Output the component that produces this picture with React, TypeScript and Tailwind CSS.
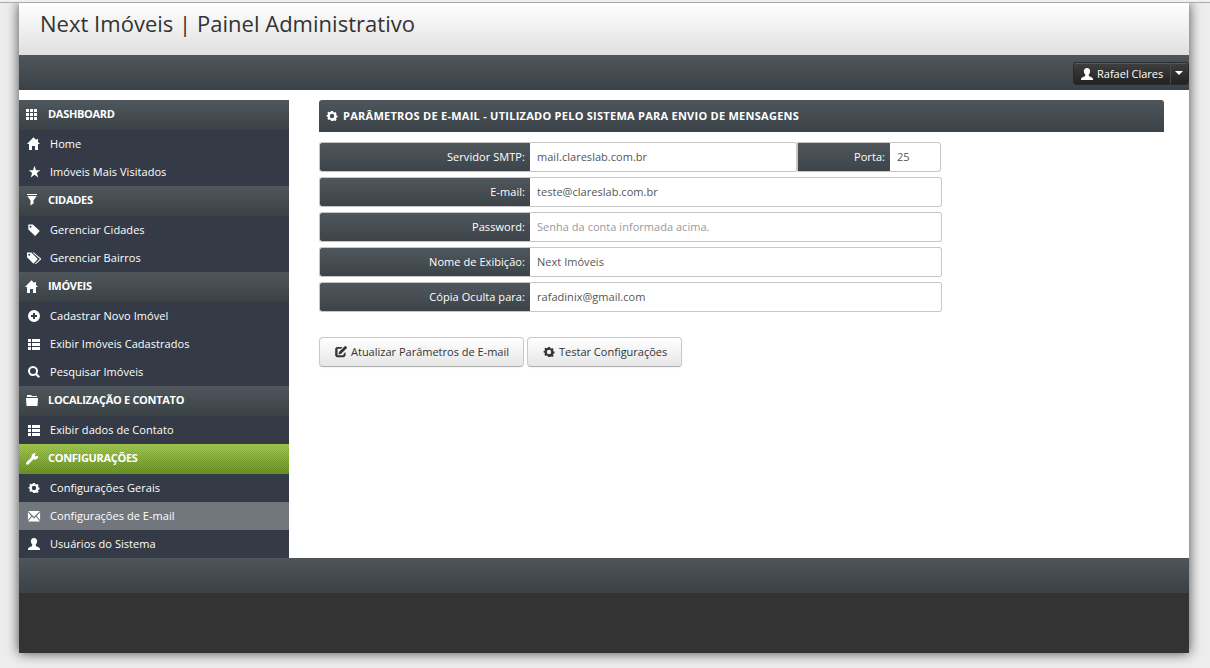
import React from 'react';
import clsx from 'clsx';

type IconName =
  | 'grid'
  | 'home'
  | 'star'
  | 'filter'
  | 'tag'
  | 'tags'
  | 'plus'
  | 'list'
  | 'search'
  | 'folder'
  | 'wrench'
  | 'cog'
  | 'mail'
  | 'user'
  | 'edit';

const ICONS: Record<IconName, string> = {
  grid: 'M1 1h3v3H1zM5 1h3v3H5zM9 1h3v3H9zM1 5h3v3H1zM5 5h3v3H5zM9 5h3v3H9zM1 9h3v3H1zM5 9h3v3H5zM9 9h3v3H9z',
  home: 'M6.500.300L0 7h2v6h3V9h3v4h3V7h2l-2-2V2H9.500v1.300z',
  star: 'M7.500.800L9 5.300h4.200L9.900 8l1.300 4.500-3.700-2.700-3.700 2.700L5.100 8 1.800 5.300H6z',
  filter: 'M2 0h10v1H2zM2.300 2h9.400L8.500 6.500V9.500L5.500 11.500V6.500z',
  tag: 'M1.300 1.500h4.500l7 6.500-4.600 5L1.300 6.500zM3.500 2.800a1 1 0 1 0 0 2 1 1 0 0 0 0-2z',
  tags: 'M0 1.500h4.300l6.500 6.500-4.300 4.700L0 6.300zM2.300 2.800a1 1 0 1 0 0 2 1 1 0 0 0 0-2zM5.500 1.500h1.300l7.700 6.500-5.500 5h-1.200L12.900 8z',
  plus: 'M7 1a6 6 0 1 0 0 12A6 6 0 0 0 7 1zM6 4h2v2h2v2H8v2H6V8H4V6h2z',
  list: 'M1 2h3v3H1zM5 2h8v3H5zM1 6h3v3H1zM5 6h8v3H5zM1 10h3v3H1zM5 10h8v3H5z',
  search:
    'M6 1a5 5 0 1 0 2.700 9.200L11.500 13 13 11.500l-2.800-2.800A5 5 0 0 0 6 1zM6 3a3 3 0 1 1 0 6 3 3 0 0 1 0-6z',
  folder: 'M2 3V1h4l1 1h5v1H2zM1 4h12l-.5 8h-11z',
  wrench: 'M9.500 1.300L11 .8 9.700 3l1 1.500 2.500-.8c0 3-2 4.500-4.600 3.500L3.300 12.500c-1.500 1-3-.5-2-2L6.500 5.300C6 3.500 7.200 1.500 9.500 1.300z',
  cog: 'M6 1.700h2l.4 1.300 1 .4 1.200-.6 1.400 1.400-.6 1.200.4 1 1.200.4v1.800l-1.200.4-.4 1 .6 1.200-1.400 1.400-1.200-.6-1 .4L8 12.700H6l-.4-1.300-1-.4-1.200.6L2 10.200 2.600 9l-.4-1L1 7.600V6.400L2.200 6l.4-1L2 3.800l1.400-1.300 1.200.6 1-.4zM7 4.800a2.400 2.400 0 1 0 0 4.800A2.400 2.400 0 0 0 7 4.800z',
  mail: 'M1 2h12L7 7.700zM.9 3.300L4.300 6.900.9 11zM13.100 3.300L9.700 6.900l3.400 4.100zM5 7.700l2 1.800 2-1.800L13 12.500H1z',
  user: 'M7 1c2 0 3.200 1.300 3.100 3.200 0 1.300-.5 2.400-1.300 3.200v1.300c.4 1 4.200 1.300 4.200 3.300v1H1v-1c0-2 3.800-2.300 4.200-3.300V7.400C4.400 6.600 3.900 5.500 3.900 4.200 3.800 2.300 5 1 7 1z',
  edit: 'M2.800 2h5.700L7 3.800H3.500v6.400h6V9l2-2v3.700L10 12.300H2.800L1.200 10.700V3.600zM11.300.8l1.900 1.900-6 6-2.900.9.900-2.900z',
};

const Icon = ({ name, className }: { name: IconName; className?: string }) => (
  <svg
    viewBox={name === 'cog' ? '-0.6 -0.4 15.200 15.200' : '0 0 14 14'}
    className={clsx('h-[14px] w-[14px] shrink-0', className)}
    fill="currentColor"
    fillRule="evenodd"
  >
    <path d={ICONS[name]} />
  </svg>
);

interface MenuItem {
  icon: IconName;
  label: string;
  active?: boolean;
}

interface MenuGroup {
  icon: IconName;
  title: string;
  active?: boolean;
  items: MenuItem[];
}

const MENU: MenuGroup[] = [
  {
    icon: 'grid',
    title: 'DASHBOARD',
    items: [
      { icon: 'home', label: 'Home' },
      { icon: 'star', label: 'Imóveis Mais Visitados' },
    ],
  },
  {
    icon: 'filter',
    title: 'CIDADES',
    items: [
      { icon: 'tag', label: 'Gerenciar Cidades' },
      { icon: 'tags', label: 'Gerenciar Bairros' },
    ],
  },
  {
    icon: 'home',
    title: 'IMÓVEIS',
    items: [
      { icon: 'plus', label: 'Cadastrar Novo Imóvel' },
      { icon: 'list', label: 'Exibir Imóveis Cadastrados' },
      { icon: 'search', label: 'Pesquisar Imóveis' },
    ],
  },
  {
    icon: 'folder',
    title: 'LOCALIZAÇÃO E CONTATO',
    items: [{ icon: 'list', label: 'Exibir dados de Contato' }],
  },
  {
    icon: 'wrench',
    title: 'CONFIGURAÇÕES',
    active: true,
    items: [
      { icon: 'cog', label: 'Configurações Gerais' },
      { icon: 'mail', label: 'Configurações de E-mail', active: true },
      { icon: 'user', label: 'Usuários do Sistema' },
    ],
  },
];

const Sidebar = () => (
  <nav className="w-[270px] shrink-0 bg-[#353b46] text-white">
    {MENU.map((group) => (
      <div key={group.title}>
        <div
          className={clsx(
            'flex h-[30px] items-center pb-px pl-1.5 font-bold',
            group.active
              ? 'bg-[repeating-conic-gradient(rgba(0,0,0,0.1)_0_25%,transparent_0_50%),linear-gradient(#a4cf4c,#6d9620)] bg-[length:2px_2px,100%_100%]'
              : 'bg-linear-to-b from-[#4f575c] to-[#3b4246]'
          )}
        >
          <Icon name={group.icon} className="mr-[9px]" />
          <span className="mb-0.5 tracking-[-0.3px]">{group.title}</span>
        </div>
        {group.items.map((item) => (
          <div
            key={item.label}
            className={clsx('flex h-7 items-center pl-2', item.active && 'bg-[#72777d]')}
          >
            <Icon name={item.icon} className="mr-[9px]" />
            <span className="tracking-[0.05px]">{item.label}</span>
          </div>
        ))}
      </div>
    ))}
  </nav>
);

interface FieldProps {
  label: string;
  value?: string;
  placeholder?: string;
  labelClass?: string;
  inputClass?: string;
}

const Field = ({
  label,
  value,
  placeholder,
  labelClass = 'w-[211px] rounded-l-[3px]',
  inputClass = 'w-[412px]',
}: FieldProps) => (
  <label className="flex h-[30px]">
    <span
      className={clsx(
        'flex items-center justify-end border border-r-0 border-[#c4c6c8] bg-linear-to-b from-[#4f575d] to-[#3d4449] pr-[5px] tracking-[0.06px] text-white',
        labelClass
      )}
    >
      {label}
    </span>
    <input
      type="text"
      defaultValue={value}
      placeholder={placeholder}
      className={clsx(
        'rounded-r-[3px] border border-l-0 border-[#c8c8c8] bg-white pl-[7px] tracking-[0.03px] text-[#555] outline-none placeholder:text-[#999]',
        inputClass
      )}
    />
  </label>
);

const BUTTON =
  'flex h-[30px] items-center rounded-[4px] border border-[#c9c9c9] border-b-[#b0b0b0] bg-linear-to-b from-white to-[#e6e6e6] pl-[14px] text-[#333] shadow-[0_1px_2px_rgba(0,0,0,0.05)]';

const EmailSettings = () => (
  <main className="ml-[30px] w-[845px]">
    <h2 className="flex h-8 items-center rounded-t-[3px] bg-linear-to-b from-[#4e555b] to-[#3c4348] pl-1.5 font-bold text-white">
      <Icon name="cog" className="mr-1" />
      <span className="tracking-[0.26px]">
        PARÂMETROS DE E-MAIL - UTILIZADO PELO SISTEMA PARA ENVIO DE MENSAGENS
      </span>
    </h2>
    <form className="mt-2.5 flex flex-col gap-[5px]">
      <div className="flex">
        <Field label="Servidor SMTP:" value="mail.clareslab.com.br" inputClass="w-[267px]" />
        <Field label="Porta:" value="25" labelClass="w-[93px]" inputClass="w-[51px]" />
      </div>
      <Field label="E-mail:" value="teste@clareslab.com.br" />
      <Field label="Password:" placeholder="Senha da conta informada acima." />
      <Field label="Nome de Exibição:" value="Next Imóveis" />
      <Field label="Cópia Oculta para:" value="rafadinix@gmail.com" />
      <div className="mt-5 flex gap-[3px]">
        <button type="button" className={clsx(BUTTON, 'w-[205px]')}>
          <Icon name="edit" className="mr-[3px]" />
          Atualizar Parâmetros de E-mail
        </button>
        <button type="button" className={clsx(BUTTON, 'w-[155px]')}>
          <Icon name="cog" className="mr-[3px]" />
          Testar Configurações
        </button>
      </div>
    </form>
  </main>
);

const UserMenu = () => (
  <div className="flex h-[23px] rounded-[3px] border border-[#2b2b2b] bg-linear-to-b from-[#404040] to-[#222] text-white shadow-[inset_0_1px_0_rgba(255,255,255,0.15)]">
    <button type="button" className="flex w-[97px] items-center border-r border-[#484848] pl-[6px]">
      <Icon name="user" className="mr-[3px]" />
      <span className="whitespace-nowrap">Rafael Clares</span>
    </button>
    <button type="button" className="flex w-[17px] items-center pl-1">
      <svg viewBox="0 0 8 4" className="mb-0.5 h-1 w-2" fill="currentColor">
        <path d="M0 0h8L4 4z" />
      </svg>
    </button>
  </div>
);

export default function App() {
  return (
    <div className="h-[668px] w-[1210px] overflow-hidden bg-[#eee] font-['Open_Sans',sans-serif] text-[11px] leading-4">
      <div className="relative z-10 h-[3px] border-b border-[#a9a9a9] bg-[#f0f0f0]" />
      <div className="ml-[19px] h-[650px] w-[1170px] bg-[#333] shadow-[0_0_12px_#444]">
        <header className="h-[52px] bg-linear-to-b from-white to-[#e0e0e0] pl-[21px]">
          <h1 className="pt-[5px] text-[22px] leading-[30px] tracking-[0.02px] text-[#333]">
            Next Imóveis | Painel Administrativo
          </h1>
        </header>
        <div className="flex h-[35px] items-center justify-end bg-linear-to-b from-[#4f565b] to-[#3a4147] pt-0.5">
          <UserMenu />
        </div>
        <div className="flex bg-white pt-2.5">
          <Sidebar />
          <EmailSettings />
        </div>
        <footer className="h-[35px] bg-linear-to-b from-[#4f565b] to-[#3a4147]" />
      </div>
    </div>
  );
}
